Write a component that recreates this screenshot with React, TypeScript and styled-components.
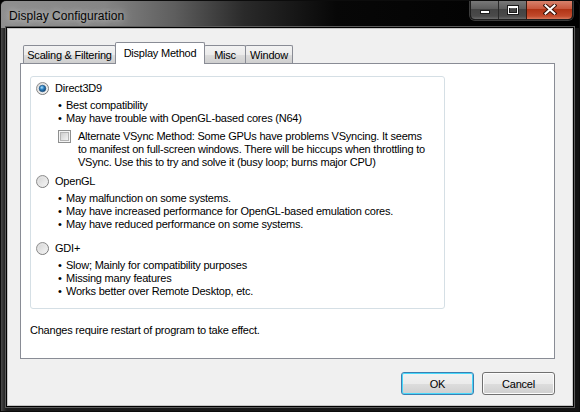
import styled, { createGlobalStyle } from "styled-components";

const GlobalStyle = createGlobalStyle`
  html, body {
    margin: 0;
    padding: 0;
    background: #000;
  }
  body {
    font-family: "Liberation Sans", Arial, sans-serif;
    font-size: 11px;
    letter-spacing: -0.22px;
    color: #000;
  }
`;

const Window = styled.div`
  width: 580px;
  height: 412px;
  box-sizing: border-box;
  display: flex;
  flex-direction: column;
  border: 1px solid #0c0c0c;
  border-radius: 6px 6px 0 0;
  overflow: hidden;
  background: linear-gradient(90deg, #4a4a4a 0, #2c2c2c 3px, #1a1a1a 6px, #121212 100%);
`;

const TitleBar = styled.div`
  height: 27px;
  flex-shrink: 0;
  display: flex;
  justify-content: space-between;
  align-items: flex-start;
  padding: 0 6px 0 8px;
  background: linear-gradient(90deg, #8f8f8f 0, #858585 18%, #5e5e5e 30%, #2a2a2a 42%, #070707 58%, #000 100%);
`;

const Title = styled.span`
  margin-top: 8px;
  font-size: 12px;
  letter-spacing: 0.05px;
  color: #050505;
  text-shadow: 0 0 6px rgba(255, 255, 255, 0.55), 0 0 12px rgba(255, 255, 255, 0.45);
`;

const CaptionGroup = styled.div`
  display: flex;
  height: 19px;
  margin-top: -1px;
  border: 1px solid #1e1e1e;
  border-top: none;
  border-radius: 0 0 5px 5px;
  overflow: hidden;
  box-shadow: 0 0 0 1px rgba(170, 170, 170, 0.35);
`;

const CaptionButton = styled.div<{ $wide?: boolean; $close?: boolean }>`
  width: ${(p) => (p.$wide ? "45px" : "27px")};
  display: flex;
  align-items: center;
  justify-content: center;
  border-left: ${(p) => (p.$close ? "1px solid #3a1a10" : "1px solid #2a2a2a")};
  box-shadow: inset 0 1px 0 rgba(255, 255, 255, 0.25);
  background: ${(p) =>
    p.$close
      ? "linear-gradient(180deg, #d98772 0, #c9583e 45%, #b13416 50%, #c24a2c 85%, #d7775a 100%)"
      : "linear-gradient(180deg, #7c7c7c 0, #5f5f5f 45%, #444 50%, #4a4a4a 85%, #6a6a6a 100%)"};
  &:first-child {
    border-left: none;
  }
`;

const Client = styled.div`
  flex: 1;
  margin: 0 6px 5px 6px;
  display: flex;
  flex-direction: column;
  background: #f0f0f0;
  border: 1px solid #c4c4c4;
  box-shadow: 0 0 0 1px #000, 0 0 0 2px #5a5a5a;
  padding: 13px 18px 0 12px;
`;

const TabStrip = styled.div`
  display: flex;
  align-items: flex-end;
  height: 21px;
  padding-left: 3px;
`;

const Tab = styled.div<{ $active?: boolean; $w: number }>`
  box-sizing: border-box;
  width: ${(p) => p.$w}px;
  height: ${(p) => (p.$active ? "22px" : "18px")};
  margin-bottom: ${(p) => (p.$active ? "-1px" : "0")};
  margin-left: -1px;
  position: relative;
  z-index: ${(p) => (p.$active ? 2 : 1)};
  display: flex;
  align-items: center;
  justify-content: center;
  padding-bottom: ${(p) => (p.$active ? "2px" : "0")};
  border: 1px solid #898c95;
  border-bottom: none;
  border-radius: 2px 2px 0 0;
  background: ${(p) =>
    p.$active ? "#fff" : "linear-gradient(180deg, #f3f3f3 0, #ebebeb 50%, #dddddd 51%, #cfcfcf 100%)"};
  &:first-child {
    margin-left: 0;
  }
`;

const Panel = styled.div`
  box-sizing: border-box;
  width: 535px;
  height: 296px;
  border: 1px solid #898c95;
  background: #fff;
  padding: 12px 0 0 9px;
  display: flex;
  flex-direction: column;
`;

const GroupBox = styled.div`
  box-sizing: border-box;
  width: 415px;
  height: 233px;
  border: 1px solid #d5dfe5;
  border-radius: 3px;
  padding: 5px 0 0 5px;
  display: flex;
  flex-direction: column;
`;

const Option = styled.div<{ $gap: number }>`
  display: flex;
  flex-direction: column;
  margin-top: ${(p) => p.$gap}px;
  &:first-child {
    margin-top: 0;
  }
`;

const OptionRow = styled.div`
  display: flex;
  align-items: center;
  gap: 6px;
  height: 13px;
  line-height: 13px;
`;

const BulletList = styled.ul`
  list-style: none;
  margin: 4px 0 0 22px;
  padding: 0;
`;

const Bullet = styled.li`
  display: flex;
  line-height: 13px;
  &::before {
    content: "•";
    width: 8px;
    flex-shrink: 0;
  }
`;

const CheckRow = styled.div`
  display: flex;
  align-items: flex-start;
  gap: 7px;
  margin: 5px 0 0 22px;
  line-height: 13px;
`;

const Note = styled.p`
  margin: 15px 0 0 0;
  line-height: 13px;
`;

const ButtonRow = styled.div`
  display: flex;
  justify-content: flex-end;
  gap: 8px;
  width: 535px;
  margin-top: 13px;
`;

const PushButton = styled.div<{ $default?: boolean }>`
  box-sizing: border-box;
  width: 73px;
  height: 23px;
  display: flex;
  align-items: center;
  justify-content: center;
  border: 1px solid ${(p) => (p.$default ? "#3c7fb1" : "#707070")};
  border-radius: 3px;
  box-shadow: inset 0 0 0 1px ${(p) => (p.$default ? "#48d8fb" : "#fcfcfc")};
  background: linear-gradient(180deg, #f2f2f2 0, #ebebeb 50%, #dddddd 51%, #cfcfcf 100%);
  color: #000;
`;

function Radio({ checked }: { checked?: boolean }) {
  return (
    <svg width="13" height="13" viewBox="0 0 13 13">
      <defs>
        <linearGradient id="radioRim" x1="0" y1="0" x2="1" y2="1">
          <stop offset="0" stopColor="#9a9a9a" />
          <stop offset="1" stopColor="#707070" />
        </linearGradient>
        <linearGradient id="radioFill" x1="0" y1="0" x2="1" y2="1">
          <stop offset="0" stopColor="#cfcfcf" />
          <stop offset="1" stopColor="#fafafa" />
        </linearGradient>
        <radialGradient id="radioDot" cx="0.4" cy="0.35" r="0.7">
          <stop offset="0" stopColor="#aee3ff" />
          <stop offset="0.45" stopColor="#2b7fc0" />
          <stop offset="1" stopColor="#0f3d6b" />
        </radialGradient>
      </defs>
      <circle cx="6.5" cy="6.5" r="6" fill="url(#radioFill)" stroke="url(#radioRim)" />
      <circle cx="6.5" cy="6.5" r="4.4" fill="none" stroke="#e8e8e8" strokeWidth="0.8" />
      {checked && <circle cx="6.5" cy="6.5" r="3.3" fill="url(#radioDot)" stroke="#1a4f7e" strokeWidth="0.6" />}
    </svg>
  );
}

function CheckBox() {
  return (
    <svg width="13" height="13" viewBox="0 0 13 13" style={{ flexShrink: 0 }}>
      <defs>
        <linearGradient id="checkFill" x1="0" y1="0" x2="1" y2="1">
          <stop offset="0" stopColor="#cbcbcb" />
          <stop offset="1" stopColor="#f6f6f6" />
        </linearGradient>
      </defs>
      <rect x="0.5" y="0.5" width="12" height="12" fill="#f4f4f4" stroke="#8e8f8f" />
      <rect x="2.5" y="2.5" width="8" height="8" fill="url(#checkFill)" stroke="#b4b4b4" />
    </svg>
  );
}

function MinimizeGlyph() {
  return (
    <svg width="12" height="10" viewBox="0 0 12 10">
      <rect x="1.5" y="5.5" width="9" height="3" fill="#fff" stroke="#1c1c1c" />
    </svg>
  );
}

function MaximizeGlyph() {
  return (
    <svg width="12" height="10" viewBox="0 0 12 10">
      <rect x="1.5" y="1.5" width="9" height="7" fill="none" stroke="#1c1c1c" strokeWidth="3" />
      <rect x="1.5" y="1.5" width="9" height="7" fill="none" stroke="#fff" strokeWidth="1" />
      <rect x="2" y="1.5" width="8" height="1.5" fill="#fff" />
    </svg>
  );
}

function CloseGlyph() {
  return (
    <svg width="14" height="11" viewBox="0 0 14 11">
      <path d="M2.5 1.5 L11.5 9.5 M11.5 1.5 L2.5 9.5" stroke="#3a1208" strokeWidth="4" strokeLinecap="square" />
      <path d="M2.5 1.5 L11.5 9.5 M11.5 1.5 L2.5 9.5" stroke="#fff" strokeWidth="2" strokeLinecap="square" />
    </svg>
  );
}

const tabs = [
  { label: "Scaling & Filtering", width: 93 },
  { label: "Display Method", width: 90, active: true },
  { label: "Misc", width: 42 },
  { label: "Window", width: 48 },
];

export default function App() {
  return (
    <>
      <GlobalStyle />
      <Window>
        <TitleBar>
          <Title>Display Configuration</Title>
          <CaptionGroup>
            <CaptionButton>
              <MinimizeGlyph />
            </CaptionButton>
            <CaptionButton>
              <MaximizeGlyph />
            </CaptionButton>
            <CaptionButton $wide $close>
              <CloseGlyph />
            </CaptionButton>
          </CaptionGroup>
        </TitleBar>

        <Client>
          <TabStrip>
            {tabs.map((t) => (
              <Tab key={t.label} $active={t.active} $w={t.width}>
                {t.label}
              </Tab>
            ))}
          </TabStrip>

          <Panel>
            <GroupBox>
              <Option $gap={0}>
                <OptionRow>
                  <Radio checked />
                  Direct3D9
                </OptionRow>
                <BulletList>
                  <Bullet>Best compatibility</Bullet>
                  <Bullet>May have trouble with OpenGL-based cores (N64)</Bullet>
                </BulletList>
                <CheckRow>
                  <CheckBox />
                  <span>
                    Alternate VSync Method: Some GPUs have problems VSyncing. It seems
                    <br />
                    to manifest on full-screen windows. There will be hiccups when throttling to
                    <br />
                    VSync. Use this to try and solve it (busy loop; burns major CPU)
                  </span>
                </CheckRow>
              </Option>

              <Option $gap={6}>
                <OptionRow>
                  <Radio />
                  OpenGL
                </OptionRow>
                <BulletList>
                  <Bullet>May malfunction on some systems.</Bullet>
                  <Bullet>May have increased performance for OpenGL-based emulation cores.</Bullet>
                  <Bullet>May have reduced performance on some systems.</Bullet>
                </BulletList>
              </Option>

              <Option $gap={11}>
                <OptionRow>
                  <Radio />
                  GDI+
                </OptionRow>
                <BulletList>
                  <Bullet>Slow; Mainly for compatibility purposes</Bullet>
                  <Bullet>Missing many features</Bullet>
                  <Bullet>Works better over Remote Desktop, etc.</Bullet>
                </BulletList>
              </Option>
            </GroupBox>

            <Note>Changes require restart of program to take effect.</Note>
          </Panel>

          <ButtonRow>
            <PushButton $default>OK</PushButton>
            <PushButton>Cancel</PushButton>
          </ButtonRow>
        </Client>
      </Window>
    </>
  );
}
